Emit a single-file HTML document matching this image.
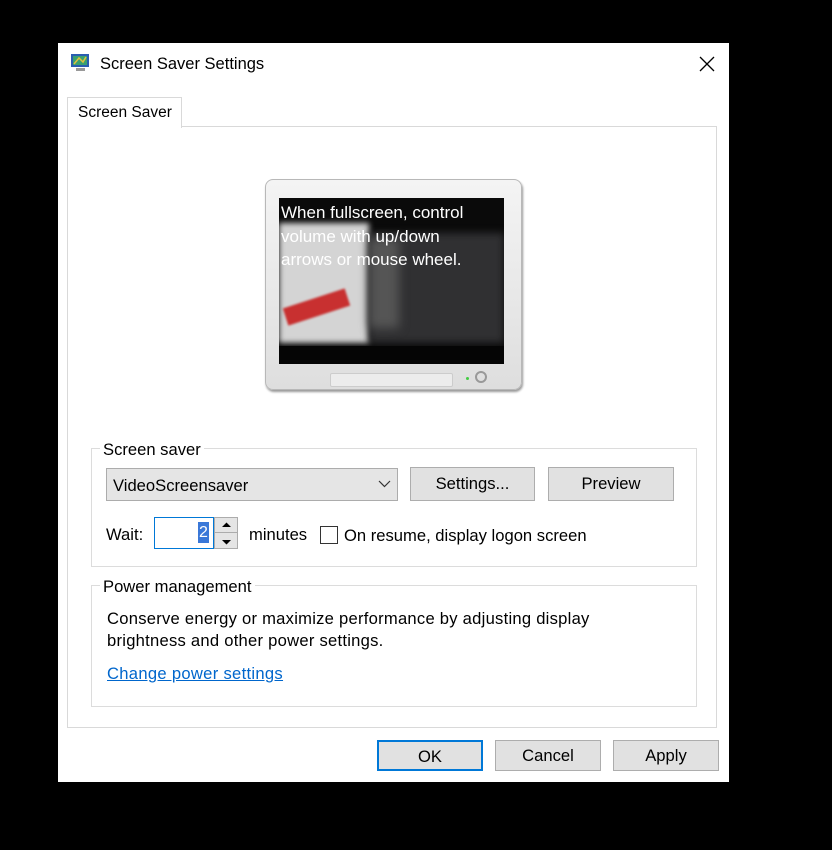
<!DOCTYPE html>
<html><head><meta charset="utf-8"><style>
*{box-sizing:border-box;margin:0;padding:0}
body{width:832px;height:850px;background:#000;position:relative;font-family:"Liberation Sans",sans-serif;font-size:16px;color:#000;overflow:hidden}
.abs{position:absolute}
.win{left:58px;top:43px;width:671px;height:739px;background:#fff}
.btn{position:absolute;background:#e1e1e1;border:1px solid #adadad;text-align:center;line-height:32px;font-size:16px}
.grp{position:absolute;border:1px solid #dcdcdc}
.lbl{position:absolute;background:#fff;padding:0 3px;font-size:16px}
.t{font-size:16.6px}
</style></head><body>
<div class="abs win"></div>
<svg class="abs" style="left:70px;top:52px" width="22" height="22" viewBox="0 0 22 22">
<rect x="1" y="2" width="18" height="13" fill="#2a5db0"/><rect x="3" y="4" width="14" height="9" fill="#3aa070"/><path d="M4 12 L9 6 L13 10 L16 5" stroke="#e0c040" stroke-width="1.5" fill="none"/><rect x="6" y="16" width="9" height="3" fill="#999"/></svg>
<div class="abs" style="left:100px;top:55px;font-size:16.5px">Screen Saver Settings</div>
<svg class="abs" style="left:699px;top:56px" width="16" height="16"><path d="M1 1L15 15M15 1L1 15" stroke="#000" stroke-width="1.3"/></svg>
<div class="abs" style="left:67px;top:126px;width:650px;height:602px;border:1px solid #d9d9d9"></div>
<div class="abs" style="left:67px;top:97px;width:115px;height:31px;border:1px solid #d9d9d9;border-bottom:none;background:#fff;padding:6px 0 0 10px;font-size:15.5px">Screen Saver</div>
<div class="abs" style="left:265px;top:179px;width:257px;height:211px;border-radius:8px;background:linear-gradient(#f4f4f4,#dedede);border:1px solid #b8b8b8;box-shadow:1px 2px 2px #999"></div>
<div class="abs" style="left:279px;top:198px;width:225px;height:166px;background:#0a0a0a;overflow:hidden">
 <div class="abs" style="left:0;top:25px;width:90px;height:120px;background:#d4d4d4;filter:blur(3px)"></div>
 <div class="abs" style="left:5px;top:100px;width:65px;height:18px;background:#c83030;transform:rotate(-18deg);filter:blur(1px)"></div>
 <div class="abs" style="left:90px;top:35px;width:135px;height:110px;background:#303032;filter:blur(4px)"></div>
 <div class="abs" style="left:90px;top:40px;width:30px;height:90px;background:#555;filter:blur(5px)"></div>
 <div class="abs" style="left:0;top:148px;width:225px;height:18px;background:#050505"></div>
 <div class="abs" style="left:2px;top:3px;color:#fff;font-size:17px;line-height:23.5px;white-space:nowrap">When fullscreen, control<br>volume with up/down<br>arrows or mouse wheel.</div>
</div>
<div class="abs" style="left:330px;top:373px;width:123px;height:14px;border:1px solid #ccc;border-radius:2px;background:#ececec"></div>
<div class="abs" style="left:466px;top:377px;width:3px;height:3px;background:#4c4;border-radius:50%"></div>
<div class="abs" style="left:475px;top:371px;width:12px;height:12px;border:2px solid #999;border-radius:50%"></div>
<div class="grp" style="left:91px;top:448px;width:606px;height:119px"></div>
<div class="lbl t" style="left:100px;top:440px">Screen saver</div>
<div class="abs t" style="left:106px;top:468px;width:292px;height:33px;background:#e5e5e5;border:1px solid #acacac;padding:7px 0 0 6px">VideoScreensaver</div>
<svg class="abs" style="left:378px;top:480px" width="13" height="8"><path d="M1 1L6.5 6.5L12 1" stroke="#333" fill="none" stroke-width="1.2"/></svg>
<div class="btn t" style="left:410px;top:467px;width:125px;height:34px">Settings...</div>
<div class="btn t" style="left:548px;top:467px;width:126px;height:34px">Preview</div>
<div class="abs t" style="left:106px;top:525px">Wait:</div>
<div class="abs" style="left:154px;top:517px;width:60px;height:32px;border:1px solid #0078d7;background:#fff"></div>
<div class="abs" style="left:198px;top:522px;width:11px;height:21px;background:#3a78d8;color:#fff;line-height:21px;text-align:center">2</div>
<div class="abs" style="left:214px;top:517px;width:24px;height:32px;border:1px solid #acacac;background:#e5e5e5"></div>
<div class="abs" style="left:214px;top:532px;width:24px;height:1px;background:#acacac"></div>
<svg class="abs" style="left:222px;top:522px" width="9" height="24"><path d="M0 5L4.5 0.5L9 5Z M0 18L4.5 22.5L9 18Z" fill="#000"/></svg>
<div class="abs t" style="left:249px;top:525px">minutes</div>
<div class="abs" style="left:320px;top:526px;width:18px;height:18px;border:1px solid #333;background:#fff"></div>
<div class="abs t" style="left:344px;top:526px">On resume, display logon screen</div>
<div class="grp" style="left:91px;top:585px;width:606px;height:122px"></div>
<div class="lbl t" style="left:100px;top:577px">Power management</div>
<div class="abs t" style="left:107px;top:608px;line-height:22px;letter-spacing:0.25px">Conserve energy or maximize performance by adjusting display<br>brightness and other power settings.</div>
<div class="abs t" style="left:107px;top:664px;color:#0066cc;text-decoration:underline;letter-spacing:0.3px">Change power settings</div>
<div class="btn t" style="left:377px;top:740px;width:106px;height:31px;line-height:29px;border:2px solid #0078d7">OK</div>
<div class="btn t" style="left:495px;top:740px;width:106px;height:31px;line-height:29px">Cancel</div>
<div class="btn t" style="left:613px;top:740px;width:106px;height:31px;line-height:29px">Apply</div>
</body></html>
